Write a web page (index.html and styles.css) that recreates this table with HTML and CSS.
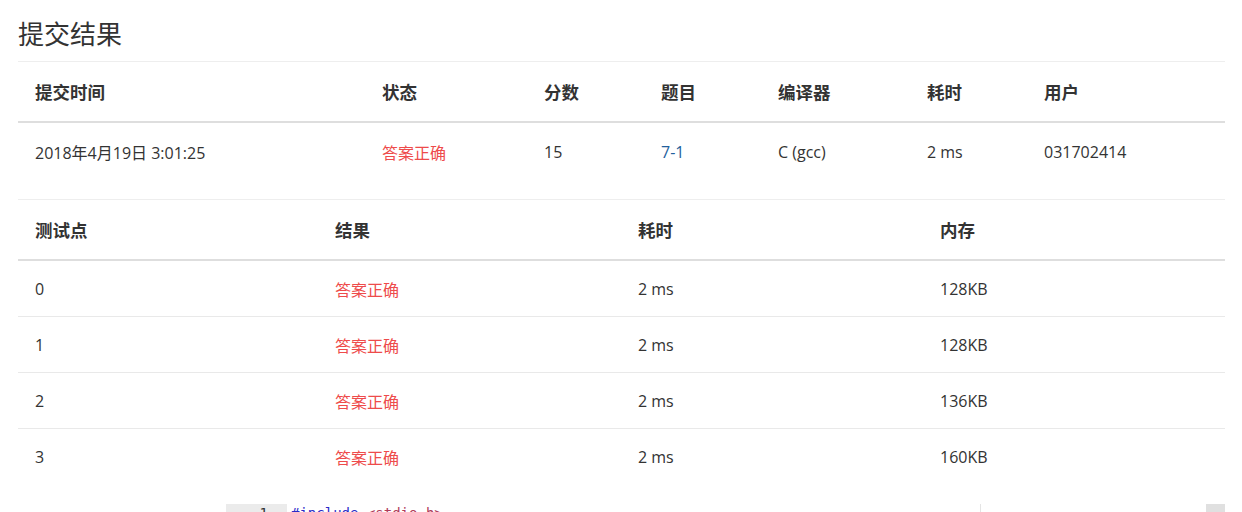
FILE: index.html
```html
<!DOCTYPE html>
<html lang="zh-CN">
<head>
<meta charset="utf-8">
<title>提交结果</title>
<link rel="stylesheet" href="styles.css">
</head>
<body>
<div class="page">
  <h3 class="title">提交结果</h3>
  <table class="tbl tbl-main">
    <colgroup>
      <col style="width:347px"><col style="width:162px"><col style="width:117px"><col style="width:117px"><col style="width:149px"><col style="width:117px"><col style="width:198px">
    </colgroup>
    <thead>
      <tr><th>提交时间</th><th>状态</th><th>分数</th><th>题目</th><th>编译器</th><th>耗时</th><th>用户</th></tr>
    </thead>
    <tbody>
      <tr><td>2018年4月19日 3:01:25</td><td class="ok">答案正确</td><td>15</td><td><a class="link" href="#">7-1</a></td><td>C (gcc)</td><td>2 ms</td><td>031702414</td></tr>
    </tbody>
  </table>
  <table class="tbl tbl-cases">
    <colgroup>
      <col style="width:300px"><col style="width:303px"><col style="width:302px"><col style="width:302px">
    </colgroup>
    <thead>
      <tr><th>测试点</th><th>结果</th><th>耗时</th><th>内存</th></tr>
    </thead>
    <tbody>
      <tr><td>0</td><td class="ok">答案正确</td><td>2 ms</td><td>128KB</td></tr>
      <tr><td>1</td><td class="ok">答案正确</td><td>2 ms</td><td>128KB</td></tr>
      <tr><td>2</td><td class="ok">答案正确</td><td>2 ms</td><td>136KB</td></tr>
      <tr><td>3</td><td class="ok">答案正确</td><td>2 ms</td><td>160KB</td></tr>
    </tbody>
  </table>
  <div class="code-wrap">
    <div class="editor">
      <div class="gutter"><div class="ln">1</div></div>
      <div class="lines"><div class="code-line"><span class="kw">#include</span> <span class="inc">&lt;stdio.h&gt;</span></div></div>
      <div class="print-margin"></div>
      <div class="scroll-thumb"></div>
    </div>
  </div>
</div>
</body>
</html>
```
FILE: styles.css
```css
html, body {
  margin: 0;
  padding: 0;
  background: #fff;
}
body {
  font-family: "Open Sans", "Noto Sans CJK SC", sans-serif;
  color: #333;
  font-size: 16px;
}
.page {
  padding: 15px 17px 0 18px;
  width: 1207px;
}
.title {
  margin: 0 0 10px 0;
  font-size: 26px;
  font-weight: normal;
  line-height: 36px;
  color: #333;
  font-family: "Noto Sans CJK SC", sans-serif;
}
.tbl {
  width: 1207px;
  border-collapse: collapse;
  table-layout: fixed;
  border-top: 1px solid #eeeeee;
}
.tbl th {
  text-align: left;
  font-weight: bold;
  font-size: 17.5px;
  height: 59px;
  padding: 0 0 0 17px;
  border-bottom: 2px solid #dedede;
  font-family: "Noto Sans CJK SC", sans-serif;
  color: #333;
}
.tbl td {
  padding: 0 0 0 17px;
  height: 55px;
  font-size: 16px;
}
.tbl-main td {
  height: 57px;
}
.tbl-main {
  margin-bottom: 19px;
}
.tbl-cases tbody tr + tr td {
  border-top: 1px solid #e9e9e9;
}
.tbl-cases {
  margin-bottom: 20px;
}
.ok {
  color: #ee4b4b;
  font-family: "Noto Sans CJK SC", sans-serif;
}
.link {
  color: #23609c;
  text-decoration: none;
}
.code-wrap {
  padding-left: 208px;
}
.editor {
  position: relative;
  display: flex;
  height: 40px;
  font-family: "DejaVu Sans Mono", monospace;
  font-size: 14px;
  line-height: 18px;
}
.gutter {
  width: 61px;
  background: #ebebeb;
  color: #333;
  height: 18px;
}
.ln {
  text-align: right;
  padding-right: 19px;
}
.lines {
  padding-left: 4px;
}
.kw {
  color: #2a2ac8;
}
.inc {
  color: #b03a5a;
}
.print-margin {
  position: absolute;
  left: 754px;
  top: 0;
  width: 1px;
  height: 40px;
  background: #e4e4e4;
}
.scroll-thumb {
  position: absolute;
  right: 0;
  top: 0;
  width: 19px;
  height: 10px;
  background: #e0e0e0;
}
```
